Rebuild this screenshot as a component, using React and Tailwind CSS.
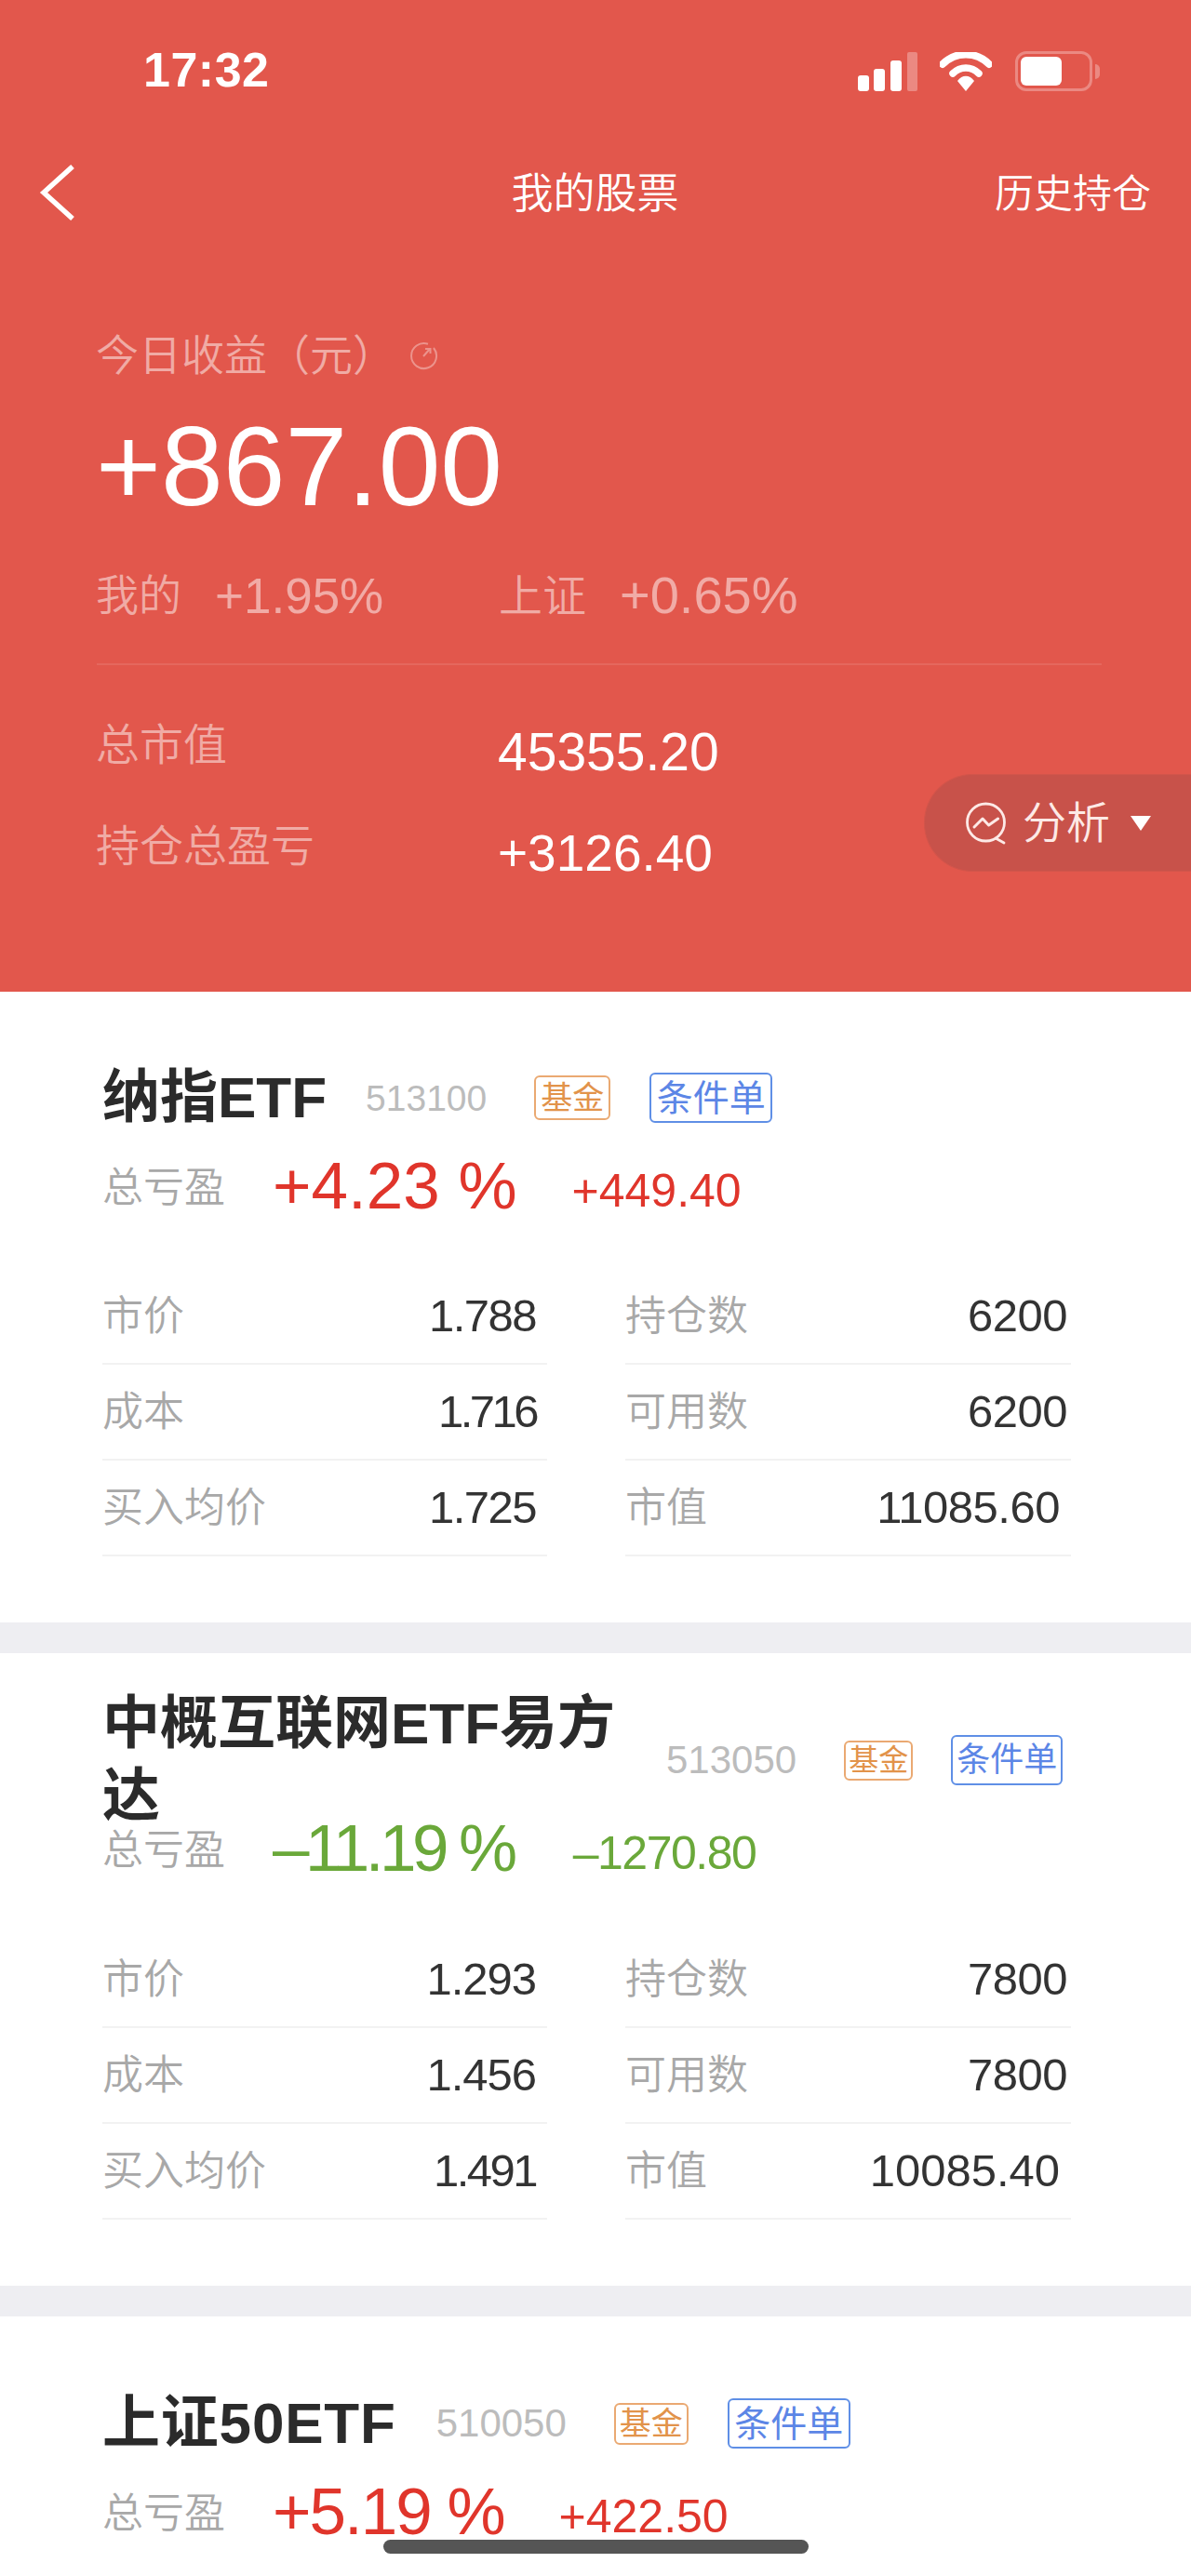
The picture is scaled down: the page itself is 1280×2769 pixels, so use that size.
const Refresh = () => (
  <svg viewBox="0 0 32 32" className="w-[32px] h-[32px] ml-[14px] mt-[2px]" fill="none" stroke="rgba(255,255,255,0.36)" strokeWidth="2">
    <path d="M21 3.8A13.5 13.5 0 1 0 27 8" />
    <path d="M16 17 L23 9 M18 9 H23.5 V14" />
  </svg>
);

const Analysis = () => (
  <svg viewBox="0 0 46 46" className="w-[46px] h-[46px]" fill="none" stroke="#fde9e6" strokeWidth="2.8" strokeLinecap="round" strokeLinejoin="round">
    <circle cx="22.5" cy="22" r="20" />
    <path d="M33 39 L42 44" />
    <path d="M10 27 L19 18 L25.6 25 L35.6 18" strokeWidth="3" />
  </svg>
);

const StatusIcons = () => (
  <div className="flex items-end gap-[24px] h-[44px]">
    <svg viewBox="0 0 64 42" className="w-[64px] h-[42px]">
      <rect x="0" y="25" width="12" height="17" rx="3" fill="#fff" />
      <rect x="17" y="18" width="12" height="24" rx="3" fill="#fff" />
      <rect x="35" y="9" width="12" height="33" rx="3" fill="#fff" />
      <rect x="53" y="0" width="11" height="42" rx="2" fill="rgba(255,255,255,0.3)" />
    </svg>
    <svg viewBox="0 0 56 42" className="w-[56px] h-[42px]" fill="none">
      <path d="M3 13 C17 -1 39 -1 53 13" stroke="#fff" strokeWidth="8" strokeLinecap="round" />
      <path d="M14 23 C22 15 34 15 42 23" stroke="#fff" strokeWidth="7.5" strokeLinecap="round" />
      <path d="M19 31 C24 24 32 24 37 31 L28 42 Z" fill="#fff" />
    </svg>
    <div className="flex items-center ml-[1px]">
      <div className="w-[83px] h-[43px] rounded-[12px] border-[3px] border-white/30 p-[3px] box-border">
        <div className="w-[44px] h-full rounded-[6px] bg-white" />
      </div>
      <div className="w-[5px] h-[16px] ml-[3px] rounded-r-full bg-white/30" />
    </div>
  </div>
);

const Row = ({ label, value, valueClass }) => (
  <div className="h-[103px] border-b-2 border-[#f2f2f2] flex items-center justify-between box-border">
    <span className="text-[44px] font-[350] text-[#a8a8a8] leading-none">{label}</span>
    <span className={`text-[49px] text-[#333333] leading-none ${valueClass}`}>{value}</span>
  </div>
);

const Card = ({ top, bottom, gap, title, titleClass, code, codeClass, fundClass, condClass, pct, pctClass, amt, amtClass, rows }) => (
  <section className={`bg-white pl-[110px] pr-[111px] ${top}`}>
    <div className="flex items-center min-h-[156px]">
      <div className={`text-[62px] leading-[78px] font-bold text-[#2b2b2b] shrink-0 ${titleClass}`}>{title}</div>
      <div className={`text-[#bcbcbc] leading-none shrink-0 ${codeClass}`}>{code}</div>
      <div className={`flex items-center justify-center border-2 border-[#eaa972] rounded-[6px] text-[#e2934a] leading-none box-border shrink-0 ${fundClass}`}>基金</div>
      <div className={`flex items-center justify-center border-2 border-[#5f8fe6] rounded-[6px] text-[#5c86e6] leading-none box-border shrink-0 ${condClass}`}>条件单</div>
    </div>
    <div className="flex items-center h-[34px]">
      <span className="text-[44px] font-[350] text-[#a8a8a8] leading-none w-[183px] shrink-0 mt-[4px]">总亏盈</span>
      <span className={`text-[71px] leading-none shrink-0 mt-[-2px] ${pctClass}`}>{pct}</span>
      <span className={`text-[50px] leading-none shrink-0 mt-[10px] ${amtClass}`}>{amt}</span>
    </div>
    {rows && (
      <div className={`grid grid-cols-[478px_479px] gap-x-[84px] ${gap} ${bottom}`}>
        {rows.map((r, i) => (
          <Row key={i} label={r[0]} value={r[1]} valueClass={r[2]} />
        ))}
      </div>
    )}
  </section>
);

export default function App() {
  return (
    <div className="relative w-[1280px] h-[2769px] overflow-hidden bg-white font-['Liberation_Sans','Noto_Sans_CJK_SC',sans-serif]">
      <header className="relative h-[1066px] bg-[#e2574c] text-white">
        <div className="flex items-center justify-between pt-[52px] pl-[154px] pr-[98px] h-[100px]">
          <span className="text-[52px] font-bold leading-none tracking-[0.5px] mt-[-2px]">17:32</span>
          <StatusIcons />
        </div>
        <nav className="grid grid-cols-[1fr_auto_1fr] items-center h-[60px] mt-[77px] pl-[42px] pr-[43px]">
          <svg viewBox="0 0 38 60" className="w-[38px] h-[60px]" fill="none" stroke="#fff" strokeWidth="5.5">
            <path d="M36 2 L5 30 L36 58" />
          </svg>
          <span className="text-[45px] font-[350] leading-none mt-[3px]">我的股票</span>
          <span className="text-[42px] font-[350] leading-none justify-self-end mt-[3px]">历史持仓</span>
        </nav>
        <div className="pl-[103px]">
          <div className="flex items-center h-[50px] mt-[119px] text-[46px] font-[350] leading-none text-white/50">
            <span className="mt-[2px]">今日收益（元）</span>
            <Refresh />
          </div>
          <div className="h-[120px] mt-[35px] text-[120px] leading-[120px]">+867.00</div>
          <div className="flex items-center h-[50px] mt-[54px] text-white/50 leading-none">
            <div className="flex items-center w-[433px]">
              <span className="text-[46px] font-[350] mr-[36px]">我的</span>
              <span className="text-[53px]">+1.95%</span>
            </div>
            <div className="flex items-center">
              <span className="text-[47px] font-[350] mr-[36px]">上证</span>
              <span className="text-[56px]">+0.65%</span>
            </div>
          </div>
          <div className="w-[1080px] h-[2px] mt-[48px] ml-[1px] bg-white/10" />
          <div className="flex h-[50px] mt-[61px]">
            <span className="w-[432px] text-[47px] font-[350] leading-[50px] text-white/50">总市值</span>
            <span className="text-[57px] leading-[50px] mt-[7px]">45355.20</span>
          </div>
          <div className="flex h-[50px] mt-[59px]">
            <span className="w-[432px] text-[47px] font-[350] leading-[50px] text-white/50">持仓总盈亏</span>
            <span className="text-[55px] leading-[50px] mt-[7px]">+3126.40</span>
          </div>
        </div>
        <div className="absolute left-[993px] top-[832px] w-[287px] h-[105px] rounded-l-[52px] bg-[#c8524a] border-t border-b border-l border-[#d2554b] flex items-center pl-[43px] text-white">
          <Analysis />
          <span className="text-[47px] font-[350] leading-none ml-[16px] text-[#fde9e6]">分析</span>
          <div className="ml-[22px] w-0 h-0 border-l-[11px] border-r-[11px] border-t-[16px] border-l-transparent border-r-transparent border-t-white" />
        </div>
      </header>

      <Card
        top="pt-[36px]"
        gap="mt-[72px]"
        bottom="pb-[71px]"
        title="纳指ETF"
        titleClass=""
        code="513100"
        codeClass="text-[39px] ml-[42px]"
        fundClass="w-[82px] h-[48px] text-[34px] ml-[51px]"
        condClass="w-[132px] h-[54px] text-[39px] ml-[42px]"
        pct="+4.23 %"
        pctClass="text-[#e0352b]"
        amt="+449.40"
        amtClass="text-[#e0352b] ml-[59px]"
        rows={[
          ["市价", "1.788", "pr-[12px] tracking-[-1.5px]"],
          ["持仓数", "6200", "pr-[4px] tracking-[-0.5px]"],
          ["成本", "1.716", "pr-[12px] tracking-[-3.5px]"],
          ["可用数", "6200", "pr-[4px] tracking-[-0.5px]"],
          ["买入均价", "1.725", "pr-[12px] tracking-[-1.5px]"],
          ["市值", "11085.60", "pr-[12px] tracking-[-0.5px]"],
        ]}
      />
      <div className="h-[33px] bg-[#eeeef2]" />
      <Card
        top="pt-[37px]"
        gap="mt-[73px]"
        bottom="pb-[71px]"
        title="中概互联网ETF易方达"
        titleClass="w-[563px]"
        code="513050"
        codeClass="text-[42px] ml-[43px]"
        fundClass="w-[74px] h-[43px] text-[32px] ml-[51px]"
        condClass="w-[120px] h-[54px] text-[36px] ml-[41px]"
        pct="–11.19 %"
        pctClass="text-[#6aa83a] tracking-[-4.5px]"
        amt="–1270.80"
        amtClass="text-[#6aa83a] ml-[64px] tracking-[-1.5px]"
        rows={[
          ["市价", "1.293", "pr-[12px] tracking-[-1px]"],
          ["持仓数", "7800", "pr-[4px] tracking-[-0.5px]"],
          ["成本", "1.456", "pr-[12px] tracking-[-1px]"],
          ["可用数", "7800", "pr-[4px] tracking-[-0.5px]"],
          ["买入均价", "1.491", "pr-[12px] tracking-[-2.5px]"],
          ["市值", "10085.40", "pr-[12px]"],
        ]}
      />
      <div className="h-[33px] bg-[#eeeef2]" />
      <Card
        top="pt-[37px]"
        title="上证50ETF"
        titleClass="tracking-[0.8px]"
        code="510050"
        codeClass="text-[42px] ml-[43px]"
        fundClass="w-[80px] h-[45px] text-[34px] ml-[51px]"
        condClass="w-[132px] h-[54px] text-[39px] ml-[42px]"
        pct="+5.19 %"
        pctClass="text-[#e0352b] tracking-[-2px]"
        amt="+422.50"
        amtClass="text-[#e0352b] ml-[59px]"
      />
      <div className="absolute left-[412px] top-[2730px] w-[457px] h-[15px] rounded-full bg-[#555555]" />
    </div>
  );
}
